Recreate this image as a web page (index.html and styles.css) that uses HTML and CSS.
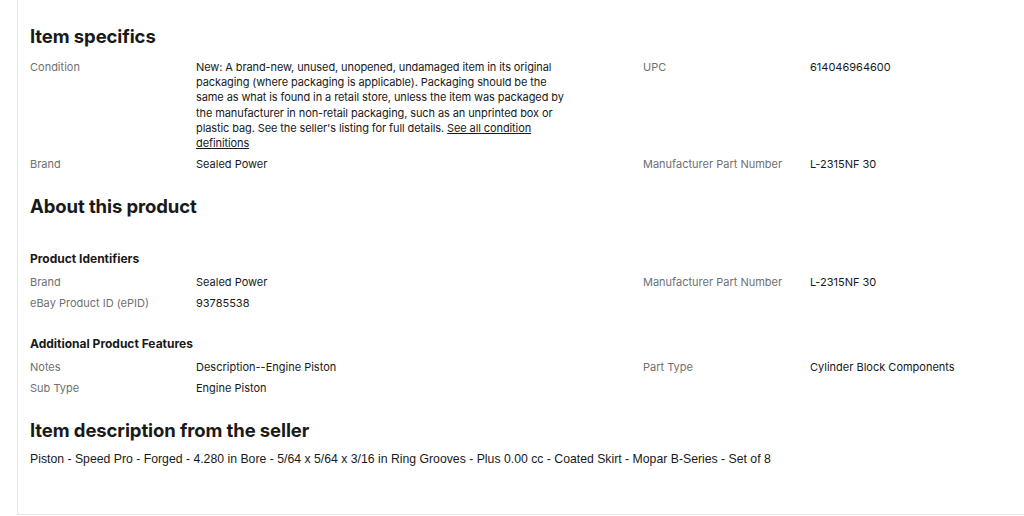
FILE: index.html
```html
<!DOCTYPE html>
<html lang="en">
<head>
<meta charset="utf-8">
<title>Item specifics</title>
<link rel="stylesheet" href="styles.css">
</head>
<body>
<div class="panel">
  <section class="specs">
    <h2 class="title">Item specifics</h2>
    <div class="grid">
      <div class="label">Condition</div>
      <div class="value cond">New: A brand-new, unused, unopened, undamaged item in its original packaging (where packaging is applicable). Packaging should be the same as what is found in a retail store, unless the item was packaged by the manufacturer in non-retail packaging, such as an unprinted box or plastic bag. See the seller's listing for full details. <a href="#" class="link">See all condition definitions</a></div>
      <div class="label">UPC</div>
      <div class="value">614046964600</div>
      <div class="label">Brand</div>
      <div class="value">Sealed Power</div>
      <div class="label">Manufacturer Part Number</div>
      <div class="value">L-2315NF 30</div>
    </div>
  </section>

  <section class="about">
    <h2 class="title">About this product</h2>
    <h3 class="subtitle first">Product Identifiers</h3>
    <div class="grid">
      <div class="label">Brand</div>
      <div class="value">Sealed Power</div>
      <div class="label">Manufacturer Part Number</div>
      <div class="value">L-2315NF 30</div>
      <div class="label">eBay Product ID (ePID)</div>
      <div class="value">93785538</div>
    </div>
    <h3 class="subtitle">Additional Product Features</h3>
    <div class="grid">
      <div class="label">Notes</div>
      <div class="value">Description--Engine Piston</div>
      <div class="label">Part Type</div>
      <div class="value">Cylinder Block Components</div>
      <div class="label">Sub Type</div>
      <div class="value">Engine Piston</div>
    </div>
  </section>

  <section class="desc">
    <h2 class="title">Item description from the seller</h2>
    <p class="desc-text">Piston - Speed Pro - Forged - 4.280 in Bore - 5/64 x 5/64 x 3/16 in Ring Grooves - Plus 0.00 cc - Coated Skirt - Mopar B-Series - Set of 8</p>
  </section>
</div>
</body>
</html>
```

FILE: styles.css
```css
html, body {
  margin: 0;
  padding: 0;
  background: #ffffff;
}

body {
  font-family: Inter, "Open Sans", "Liberation Sans", sans-serif;
  color: #191919;
  overflow: hidden;
}

.panel {
  margin-left: 17px;
  height: 515px;
  box-sizing: border-box;
  border-left: 1px solid #e5e5e5;
  border-bottom: 1px solid #e5e5e5;
  padding: 24px 0 0 12px;
}

.title {
  margin: 0;
  font-size: 18.5px;
  line-height: 24px;
  font-weight: 700;
  letter-spacing: -0.1px;
  color: #191919;
}

.specs .title {
  margin-bottom: 12px;
}

.grid {
  display: grid;
  grid-template-columns: 166px 447px 167px 1fr;
  row-gap: 6px;
  font-size: 11px;
  line-height: 15px;
}

.label {
  color: #707070;
}

.value {
  color: #191919;
}

.cond {
  padding-right: 75px;
  line-height: 15.2px;
  letter-spacing: -0.1px;
}

.link {
  color: #191919;
  text-decoration: underline;
}

.about {
  margin-top: 22px;
}

.subtitle {
  margin: 0 0 8px;
  font-size: 12px;
  line-height: 16px;
  font-weight: 700;
}

.subtitle.first {
  margin-top: 33px;
}

.about .grid + .subtitle {
  margin-top: 25px;
}

.desc {
  margin-top: 22px;
}

.desc .title {
  margin-bottom: 9px;
}

.desc-text {
  margin: 0;
  font-family: "Liberation Sans", Arial, sans-serif;
  font-size: 12.25px;
  line-height: 16px;
  color: #191919;
}
```
